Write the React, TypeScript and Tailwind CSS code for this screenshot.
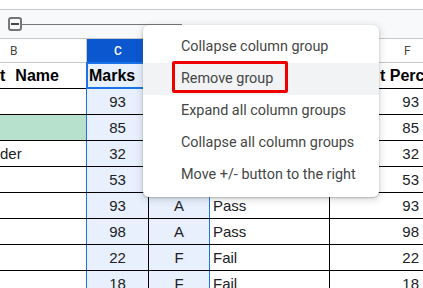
const rows = [
  { b: '', marks: 93, grade: 'A', result: 'Pass' },
  { b: '', marks: 85, grade: 'B', result: 'Pass', green: true },
  { b: 'der', marks: 32, grade: 'F', result: 'Fail' },
  { b: '', marks: 53, grade: 'D', result: 'Pass' },
  { b: '', marks: 93, grade: 'A', result: 'Pass' },
  { b: '', marks: 98, grade: 'A', result: 'Pass' },
  { b: '', marks: 22, grade: 'F', result: 'Fail' },
  { b: '', marks: 18, grade: 'F', result: 'Fail' },
]

const menuItems = [
  'Collapse column group',
  'Remove group',
  'Expand all column groups',
  'Collapse all column groups',
  'Move +/- button to the right',
]

export default function App() {
  return (
    <div className="relative w-[423px] h-[288px] overflow-hidden bg-white text-[#202124] [font-family:'Liberation_Sans',Arial,sans-serif]">
      {/* top strip */}
      <div className="h-[10px] border-b border-[#c7c7c7] bg-white" />

      {/* column group bar */}
      <div className="relative h-[29px] border-b border-[#c7c7c7] bg-[#f8f9fa]">
        <div className="absolute left-[8px] top-[7px] w-[14px] h-[14px] rounded-[3px] border-2 border-[#747775] flex items-center justify-center">
          <div className="w-[8px] h-[1.5px] bg-[#444746]" />
        </div>
        <div className="absolute left-[22px] top-[14px] w-[160px] h-[1px] bg-[#747775]" />
      </div>

      {/* column letters */}
      <div className="flex h-[24px] border-b border-[#c7c7c7] text-[12px] [font-family:Roboto,sans-serif] text-[#444746]">
        <div className="w-[87px] border-r border-[#c7c7c7] flex items-center pl-[10px]">B</div>
        <div className="w-[62px] bg-[#0b57d0] text-white font-medium flex items-center justify-center">C</div>
        <div className="w-[61px] bg-[#0b57d0] text-white font-medium flex items-center justify-center">D</div>
        <div className="w-[120px] border-r border-[#c7c7c7] flex items-center justify-center">E</div>
        <div className="flex-1 flex items-center pl-[74px]">F</div>
      </div>

      {/* header row */}
      <div className="flex h-[26px] border-b border-black text-[16px] font-bold text-black whitespace-nowrap">
        <div className="w-[87px] border-r border-[#1a73e8] flex items-center gap-[10px] overflow-hidden">
          <span>t</span>
          <span>Name</span>
        </div>
        <div className="w-[62px] bg-[#e8f0fe] border-2 border-[#1a73e8] -ml-[1px] -mt-[1px] h-[27px] flex items-center pl-[1px]">Marks</div>
        <div className="w-[61px] border-r border-[#1a73e8] bg-[#e8f0fe] flex items-center justify-center">Grade</div>
        <div className="w-[120px] border-r border-black flex items-center pl-[3px]">Result</div>
        <div className="flex-1 flex items-center pl-[51px] overflow-hidden">t Perc</div>
      </div>

      {/* data rows */}
      {rows.map((r, i) => (
        <div key={i} className="flex h-[26px] border-b border-black text-[15px] whitespace-nowrap">
          <div className={`w-[87px] border-r border-[#1a73e8] flex items-center pt-[1px] ${r.green ? 'bg-[#b7e1cd]' : ''}`}>
            {r.b}
          </div>
          <div className="w-[62px] border-r border-black bg-[#e8f0fe] flex items-center justify-center pt-[1px]">
            {r.marks}
          </div>
          <div className="w-[61px] border-r border-[#1a73e8] bg-[#e8f0fe] flex items-center justify-center pt-[1px]">
            {r.grade}
          </div>
          <div className="w-[120px] border-r border-black flex items-center pl-[3px] pt-[1px]">{r.result}</div>
          <div className="flex-1 flex items-center justify-end pr-[4px] pt-[1px]">{r.marks}</div>
        </div>
      ))}

      {/* context menu */}
      <div className="absolute left-[143px] top-[25px] w-[236px] py-[6px] bg-white rounded-[6px] shadow-[0_2px_6px_2px_rgba(60,64,67,0.15),0_1px_2px_rgba(60,64,67,0.3)] [font-family:Roboto,sans-serif] text-[14.4px] text-[#444746]">
        {menuItems.map((m, i) => (
          <div key={m} className={`h-[32px] flex items-center pl-[38px] whitespace-nowrap ${i === 1 ? 'bg-[#f1f3f4]' : ''}`}>
            {m}
          </div>
        ))}
        <div className="absolute left-[29px] top-[36px] w-[116px] h-[32px] border-[3px] border-[#ee0000] rounded-[2px]" />
      </div>
    </div>
  )
}
